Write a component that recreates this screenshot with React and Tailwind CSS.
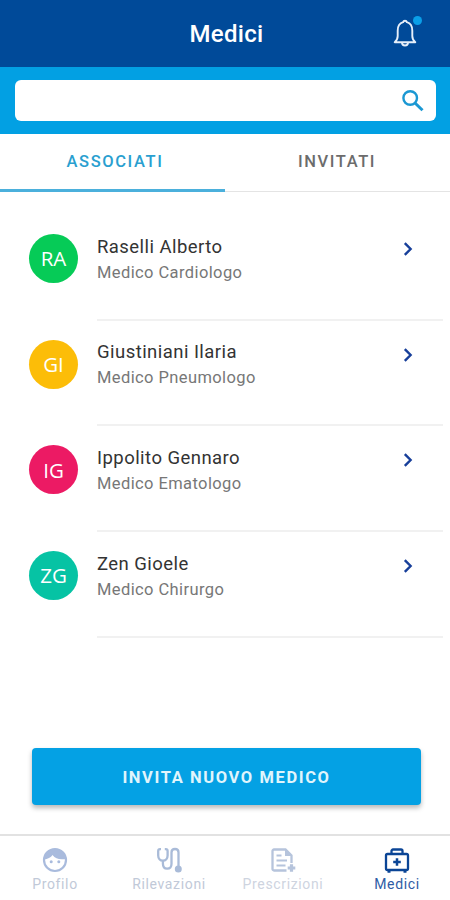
import React from 'react';

const doctors = [
    { initials: 'RA', name: 'Raselli Alberto', role: 'Medico Cardiologo', color: 'bg-[#06cb57]' },
    { initials: 'GI', name: 'Giustiniani Ilaria', role: 'Medico Pneumologo', color: 'bg-[#fcbd08]' },
    { initials: 'IG', name: 'Ippolito Gennaro', role: 'Medico Ematologo', color: 'bg-[#ec1a64]' },
    { initials: 'ZG', name: 'Zen Gioele', role: 'Medico Chirurgo', color: 'bg-[#06c3a4]' },
];

function BellIcon() {
    return (
        <svg width="24" height="29" viewBox="0 0 24 29" fill="none" stroke="currentColor" strokeWidth="1.9" strokeLinejoin="round">
            <path d="M1.7 23.2h20.6c-2-1.6-3-3.4-3-6.2v-5.2C19.3 7.2 17 4 13.9 3.2a1.95 1.95 0 0 0-3.8 0C7 4 4.7 7.2 4.7 11.8V17c0 2.8-1 4.6-3 6.2z" />
            <path d="M9 23.5a3 3 0 0 0 6 0" />
        </svg>
    );
}

function SearchIcon() {
    return (
        <svg width="22" height="22" viewBox="0 0 22 22" fill="none" stroke="currentColor">
            <circle cx="8.2" cy="8" r="6.8" strokeWidth="2.4" />
            <path d="M13 13l7.5 7.3" strokeWidth="3" />
        </svg>
    );
}

function FaceIcon() {
    return (
        <svg width="26" height="26" viewBox="0 0 26 26" fill="none" stroke="currentColor">
            <circle cx="13" cy="13" r="11" strokeWidth="2.2" />
            <path d="M2 12.5C5.5 12 9 10.5 10.500 8c3 3.800 7 5 13.300 4C23 5.500 18.500 2 13 2S2.500 6 2 12.500z" fill="currentColor" stroke="none" />
            <circle cx="9.200" cy="14.800" r="1.500" fill="currentColor" stroke="none" />
            <circle cx="16.800" cy="14.800" r="1.500" fill="currentColor" stroke="none" />
        </svg>
    );
}

function StethoscopeIcon() {
    return (
        <svg width="26" height="26" viewBox="0 0 26 26" fill="none" stroke="currentColor" strokeWidth="2.3">
            <path d="M5 2.200H4C2.800 2.200 2.200 3 2.200 4v4.500c0 3 1.900 5.200 4.700 5.200s4.700-2.200 4.700-5.200V4c0-1-.6-1.800-1.800-1.800h-1" />
            <path d="M6.900 13.700v2.800c0 3.200 1.600 5.200 4.200 5.200s4.400-2 4.400-5V5.500c0-2.200 1.300-3.500 3.500-3.500s3.500 1.300 3.500 3.500V19" />
            <circle cx="22.300" cy="22" r="3.500" fill="currentColor" stroke="none" />
        </svg>
    );
}

function PrescriptionIcon() {
    return (
        <svg width="26" height="26" viewBox="0 0 26 26" fill="none" stroke="currentColor" strokeWidth="2.3">
            <path d="M16.500 23.500H4a1.500 1.500 0 0 1-1.500-1.500V4A1.500 1.500 0 0 1 4 2.500h11.500l6 6V16" />
            <path d="M15 2.500V9h7z" fill="currentColor" stroke="none" />
            <path d="M6.500 8.500h5M6.500 13.500h10.500M6.500 18.500h9" strokeWidth="2.200" />
            <path d="M21.500 17.200v7.600M17.700 21h7.600" strokeWidth="3.200" />
        </svg>
    );
}

function MedkitIcon() {
    return (
        <svg width="26" height="26" viewBox="0 0 26 26" fill="none" stroke="currentColor" strokeWidth="2.3">
            <rect x="2" y="7" width="22" height="16" rx="1.500" />
            <path d="M7.500 7V4a1.500 1.500 0 0 1 1.500-1.500h8A1.500 1.500 0 0 1 18.500 4v3" />
            <path d="M13 11.200v7.600M9.200 15h7.600" strokeWidth="2.500" />
            <path d="M3.500 24.500h3M19.500 24.500h3" />
        </svg>
    );
}

function Chevron() {
    return (
        <svg width="10" height="14" viewBox="0 0 10 14" fill="none" stroke="#173f9a" strokeWidth="2.4">
            <path d="M1.800 1.200l5.800 5.800-5.800 5.800" />
        </svg>
    );
}

const navItems = [
    { label: 'Profilo', icon: FaceIcon, style: 'text-[#a9bbdd]', text: 'text-[#c1c9d8]' },
    { label: 'Rilevazioni', icon: StethoscopeIcon, style: 'text-[#a9bbd8]', text: 'text-[#c1c9d8]' },
    { label: 'Prescrizioni', icon: PrescriptionIcon, style: 'text-[#b6c4dc]', text: 'text-[#ced4df]' },
    { label: 'Medici', icon: MedkitIcon, style: 'text-[#0b4596]', text: 'text-[#2f5ca5]' },
];

export default function App() {
    return (
        <div className="flex h-[900px] w-[450px] flex-col overflow-hidden bg-white font-[Roboto,sans-serif]">
            <header className="grid h-[67px] shrink-0 grid-cols-[1fr_auto_1fr] items-center bg-[#004a99] text-white">
                <h1 className="col-start-2 pl-[3px] text-[24px] font-medium leading-none tracking-[0.3px]">Medici</h1>
                <div className="relative mr-[33px] justify-self-end text-[#e6effa]">
                    <BellIcon />
                    <span className="absolute -right-[5px] -top-[3px] size-[9px] rounded-full bg-[#0a9fe8]" />
                </div>
            </header>

            <div className="h-[67px] shrink-0 bg-[#02a0e3] pl-[15px] pr-[14px] pt-[13px]">
                <div className="flex h-[41px] items-center justify-end rounded-[6px] bg-white pr-[12px] text-[#1b98d3]">
                    <SearchIcon />
                </div>
            </div>

            <nav className="grid h-[58px] shrink-0 grid-cols-2 text-[16.5px] font-medium">
                <button className="border-b-[3px] border-[#4bb0dc] pl-[5px] pt-[2px] tracking-[1.6px] text-[#2a9fd0]">ASSOCIATI</button>
                <button className="border-b border-[#e4e4e4] pr-[1px] tracking-[1.6px] text-[#6c6c6c]">INVITATI</button>
            </nav>

            <ul className="flex flex-1 flex-col pl-[29px] pr-[7px] pt-[23px]">
                {doctors.map((doctor) => (
                    <li key={doctor.initials} className="flex h-[105.7px]">
                        <div className={`mt-[19px] flex size-[49px] shrink-0 items-center justify-center rounded-full text-[20.5px] text-white font-['Open_Sans',sans-serif] ${doctor.color}`}>
                            {doctor.initials}
                        </div>
                        <div className="ml-[19px] flex flex-1 justify-between border-b-2 border-[#f1f1f1] pr-[30px]">
                            <div className="pt-[18.5px]">
                                <p className="text-[18.5px] leading-[26px] tracking-[0.45px] text-[#333333]">{doctor.name}</p>
                                <p className="text-[16.5px] leading-[26px] tracking-[0.4px] text-[#777777]">{doctor.role}</p>
                            </div>
                            <div className="pt-[27px]">
                                <Chevron />
                            </div>
                        </div>
                    </li>
                ))}
            </ul>

            <div className="h-[86px] shrink-0 pl-[32px] pr-[29px]">
                <button className="h-[57px] w-full rounded-[4px] bg-[#04a1e4] pt-[3px] text-[16.5px] font-bold tracking-[1.6px] text-[#e0f5fc] shadow-[0_3px_5px_rgba(0,0,0,0.28)]">
                    INVITA NUOVO MEDICO
                </button>
            </div>

            <footer className="h-[66px] shrink-0 border-t-2 border-[#e2e2e2] pt-[11px]">
                <div className="-ml-[2px] -mr-[4px] grid grid-cols-4">
                    {navItems.map(({ label, icon: Icon, style, text }) => (
                        <div key={label} className={`flex flex-col items-center ${style}`}>
                            <Icon />
                            <span className={`mt-[2px] text-[14px] leading-[18px] tracking-[0.65px] ${text}`}>{label}</span>
                        </div>
                    ))}
                </div>
            </footer>
        </div>
    );
}
